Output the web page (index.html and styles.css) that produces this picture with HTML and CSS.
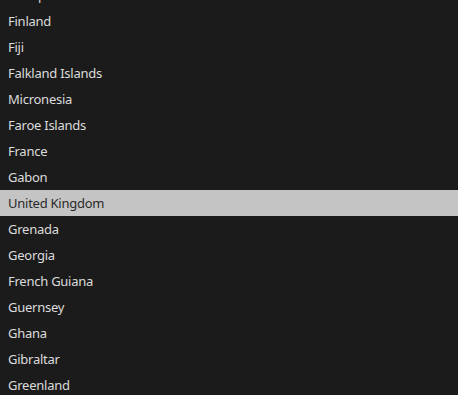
FILE: index.html
```html
<!DOCTYPE html>
<html lang="en">
<head>
    <meta charset="UTF-8" />
    <meta name="viewport" content="width=device-width, initial-scale=1" />
    <title>Countries</title>
    <link rel="stylesheet" href="styles.css">
</head>
<body>
    <ul class="country-list">
        <li>Ethiopia</li>
        <li>Finland</li>
        <li>Fiji</li>
        <li>Falkland Islands</li>
        <li>Micronesia</li>
        <li>Faroe Islands</li>
        <li>France</li>
        <li>Gabon</li>
        <li class="selected">United Kingdom</li>
        <li>Grenada</li>
        <li>Georgia</li>
        <li>French Guiana</li>
        <li>Guernsey</li>
        <li>Ghana</li>
        <li>Gibraltar</li>
        <li>Greenland</li>
    </ul>
</body>
</html>
```

FILE: styles.css
```css
html, body {
    margin: 0;
    height: 100%;
    overflow: hidden;
    background: #1b1b1b;
}

body {
    font-family: "Noto Sans", "Open Sans", sans-serif;
    font-size: 13px;
    letter-spacing: -0.25px;
    color: #dcdcdc;
}

.country-list {
    list-style: none;
    margin: -18px 0 0 0;
    padding: 0;
}

.country-list li {
    height: 26px;
    line-height: 26px;
    padding-left: 8px;
    white-space: nowrap;
}

.country-list li.selected {
    background: #c4c4c4;
    color: #2a2a2a;
}
```
